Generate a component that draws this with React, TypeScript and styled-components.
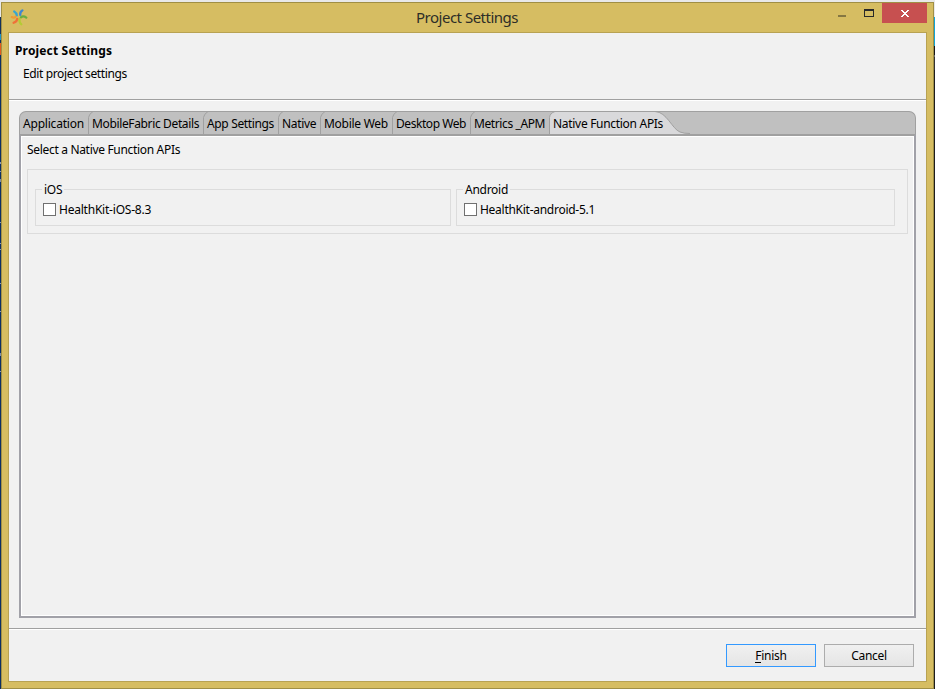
import React from "react";
import styled, { createGlobalStyle } from "styled-components";

const GlobalStyle = createGlobalStyle`
  * { box-sizing: border-box; }
  body {
    margin: 0;
    overflow: hidden;
    background: #f1f1f1;
    color: #000;
    font: 12px/16px "Noto Sans", "Open Sans", sans-serif;
  }
`;

const Desktop = styled.div`
  display: flex;
  width: 935px;
  height: 689px;
  padding-top: 2px;
  background: #e9e9e9;
`;

const LeftEdge = styled.div`
  width: 1px;
  margin-top: 15px;
  background: linear-gradient(
    #12305c 0 17px, #1d93c4 17px 23px, #12305c 23px 26px, #e2591c 26px 38px,
    #0c2e63 38px 145px, #8c9ab0 145px 147px, #0c2e63 147px 154px,
    #8c9ab0 154px 155px, #0c2e63 155px 162px,
    #7e8ca2 162px 165px, #0c2e63 165px 205px, #8c9ab0 205px 206px,
    #0c2e63 206px 226px, #8c9ab0 226px 227px, #0c2e63 227px 232px,
    #8c9ab0 232px 233px, #0c2e63 233px 266px, #8c9ab0 266px 267px,
    #0c2e63 267px 294px, #8c9ab0 294px 295px, #0c2e63 295px 336px,
    #7f8ea6 336px 339px, #0c2e63 339px 354px, #8c9ab0 354px 355px, #0c2e63 355px
  );
`;

const RightEdge = styled.div`
  width: 1px;
  margin-top: 15px;
  background: linear-gradient(#12a4d4 0 29px, #181818 29px 38px, #666 38px 40px, #333 40px 53px, #1d1d1d 53px);
`;

const Window = styled.section`
  display: flex;
  flex-direction: column;
  width: 933px;
  height: 687px;
  padding: 0 6px 6px;
  border: 1px solid #a08f45;
  background: #d6bd62;
`;

const TitleBar = styled.header`
  display: grid;
  grid-template-columns: 114px 1fr 114px;
  flex: none;
  height: 29px;
`;

const LogoCell = styled.div`
  padding: 5px 0 0 2px;
`;

const WindowTitle = styled.h1`
  margin: 0 0 0 -1px;
  padding-top: 4px;
  color: #2d2d28;
  font-size: 15px;
  font-weight: 400;
  line-height: 21px;
  letter-spacing: -0.5px;
  text-align: center;
`;

const WindowControls = styled.div`
  display: flex;
  justify-content: flex-end;
`;

const CaptionIcon = styled.svg`
  display: block;
  shape-rendering: crispEdges;
`;

const CloseButton = styled.button`
  width: 45px;
  height: 20px;
  padding: 0;
  border: 0;
  background: #c75050;
`;

const Client = styled.main`
  display: flex;
  flex: 1;
  flex-direction: column;
  min-height: 0;
  border: 1px solid #b8a252;
  background: #f1f1f1;
`;

const Heading = styled.div`
  height: 68px;
  padding: 10px 6px 0;
  border-bottom: 1px solid #fff;
  box-shadow: inset 0 -1px #a0a0a0;
`;

const PageTitle = styled.h2`
  margin: 0;
  font-size: 12px;
  font-weight: 700;
  line-height: 16px;
  letter-spacing: 0.16px;
`;

const Subtitle = styled.p`
  margin: 7px 0 0 8px;
  letter-spacing: -0.38px;
`;

const TabFolder = styled.div`
  display: flex;
  flex-direction: column;
  width: 897px;
  height: 507px;
  margin: 10px 0 0 10px;
`;

const TabBar = styled.div`
  display: flex;
  flex: none;
  height: 23px;
  overflow: hidden;
  border: 1px solid #a0a0a0;
  border-bottom: 0;
  border-radius: 7px 7px 0 0;
  background: #c0c0c0;
`;

const Tab = styled.div<{ $width: number; $spacing: number }>`
  position: relative;
  width: ${(p) => p.$width}px;
  padding: 4px 0 0 3px;
  letter-spacing: ${(p) => p.$spacing}px;
  white-space: nowrap;
`;

const TabShape = styled.svg`
  position: absolute;
  top: -1px;
  left: -1px;
  fill: none;
  stroke: #a0a0a0;
`;

const TabLabel = styled.span`
  position: relative;
`;

const Panel = styled.div`
  flex: 1;
  padding: 6px 5px;
  border: 2px solid #a1a1a8;
  border-top-color: #a0a0a0;
  box-shadow: inset 0 0 0 1px #fff;
`;

const Prompt = styled.p`
  margin: 0 0 11px 1px;
  letter-spacing: -0.32px;
`;

const Groups = styled.div`
  display: flex;
  gap: 5px;
  width: 881px;
  height: 65px;
  margin-left: 1px;
  padding: 10px 0 0 7px;
  border: 1px solid #dcdcdc;
`;

const Group = styled.fieldset<{ $width: number }>`
  width: ${(p) => p.$width}px;
  height: 46px;
  margin: 0;
  padding: 0 0 0 7px;
  border: 1px solid #dcdcdc;
`;

const Legend = styled.legend`
  height: 18px;
  margin-left: -1px;
  padding: 0 2px;
  line-height: 20px;
  letter-spacing: -0.27px;
`;

const CheckRow = styled.label<{ $spacing: number }>`
  display: flex;
  align-items: center;
  gap: 3px;
  padding-top: 4px;
  line-height: 15px;
  letter-spacing: ${(p) => p.$spacing}px;
`;

const Checkbox = styled.input`
  appearance: none;
  width: 13px;
  height: 13px;
  margin: 0;
  border: 1px solid #707070;
  background: #fff;
`;

const Footer = styled.footer`
  display: flex;
  gap: 8px;
  justify-content: flex-end;
  margin-top: 10px;
  padding: 14px 12px 0 0;
  border-top: 1px solid #a0a0a0;
  box-shadow: inset 0 1px #fff;
`;

const Button = styled.button<{ $primary?: boolean }>`
  width: 90px;
  height: 23px;
  margin-top: 1px;
  padding: 0;
  border: 1px solid ${(p) => (p.$primary ? "#3399ff" : "#acacac")};
  background: linear-gradient(#f0f0f0, #e5e5e5);
  color: #000;
  font: inherit;
  letter-spacing: -0.27px;
`;

const Mnemonic = styled.span`
  border-bottom: 1px solid #000;
  display: inline-block;
  line-height: 12px;
`;

type TabInfo = { label: string; width: number; spacing: number };

const tabs: TabInfo[] = [
  { label: "Application", width: 69, spacing: -0.2 },
  { label: "MobileFabric Details", width: 115, spacing: -0.36 },
  { label: "App Settings", width: 75, spacing: -0.35 },
  { label: "Native", width: 42, spacing: -0.35 },
  { label: "Mobile Web", width: 72, spacing: -0.27 },
  { label: "Desktop Web", width: 78, spacing: -0.44 },
  { label: "Metrics _APM", width: 79, spacing: -0.4 },
  { label: "Native Function APIs", width: 141, spacing: -0.3 },
];

const platforms = [
  { name: "iOS", item: "HealthKit-iOS-8.3", width: 416, spacing: -0.22 },
  { name: "Android", item: "HealthKit-android-5.1", width: 439, spacing: -0.27 },
];

function Logo() {
  return (
    <svg width="18" height="20" viewBox="0 0 18 20" fill="none" strokeWidth="2.3" strokeLinecap="round">
      <path d="M6.8 7.3Q6.5 4.8 4.2 3.4" stroke="#37a6cf" />
      <path d="M10.2 6.8Q9.9 4 12.4 2.4" stroke="#3f86d0" />
      <path d="M10.9 9.4Q13.2 7.3 16.3 9.6" stroke="#69ae42" />
      <path d="M9.5 11Q9 14 11.3 16.3" stroke="#b4cc34" />
      <path d="M7.2 10.8Q7 13.4 3.6 14.8" stroke="#ef7138" />
      <path d="M5.6 8.7Q4 10.3 1.8 9.1" stroke="#ef9a35" />
    </svg>
  );
}

export default function App() {
  return (
    <>
      <GlobalStyle />
      <Desktop>
        <LeftEdge />
        <Window>
          <TitleBar>
            <LogoCell>
              <Logo />
            </LogoCell>
            <WindowTitle>Project Settings</WindowTitle>
            <WindowControls>
              <CaptionIcon width="44" height="20" viewBox="0 0 44 20">
                <path d="M0 12h8v2H0z" fill="#857742" />
                <path d="M26 6h10v8H26zM27 8v5h8V8z" fill="#292929" fillRule="evenodd" />
              </CaptionIcon>
              <CloseButton aria-label="Close">
                <CaptionIcon width="45" height="20" viewBox="0 0 45 20">
                  <path
                    d="M19 7h2v1h1v1h2V8h1V7h2v1h-1v1h-1v1h-1v1h1v1h1v1h1v1h-2v-1h-1v-1h-2v1h-1v1h-2v-1h1v-1h1v-1h1v-1h-1V9h-1V8h-1z"
                    fill="#fff"
                  />
                </CaptionIcon>
              </CloseButton>
            </WindowControls>
          </TitleBar>
          <Client>
            <Heading>
              <PageTitle>Project Settings</PageTitle>
              <Subtitle>Edit project settings</Subtitle>
            </Heading>
            <TabFolder>
              <TabBar>
                {tabs.map((tab, i) => (
                  <Tab key={tab.label} $width={tab.width} $spacing={tab.spacing}>
                    {i === tabs.length - 1 ? (
                      <TabShape width="145" height="24">
                        <path
                          d="M.5 23V6.5Q1 2 6 .5H106C118 1 123 18 131 21Q135 23 141 23Z"
                          fill="#d9d9db"
                          stroke="none"
                        />
                        <path d="M.5 23V6.5Q1 2 6 .5H106C118 1 123 18 131 21Q135 22.5 141 22.5" />
                      </TabShape>
                    ) : (
                      i > 0 && (
                        <TabShape width="8" height="24">
                          <path d="M.5 23V6.5Q1 3 5 .5" />
                        </TabShape>
                      )
                    )}
                    <TabLabel>{tab.label}</TabLabel>
                  </Tab>
                ))}
              </TabBar>
              <Panel>
                <Prompt>Select a Native Function APIs</Prompt>
                <Groups>
                  {platforms.map((p) => (
                    <Group key={p.name} $width={p.width}>
                      <Legend>{p.name}</Legend>
                      <CheckRow $spacing={p.spacing}>
                        <Checkbox type="checkbox" />
                        {p.item}
                      </CheckRow>
                    </Group>
                  ))}
                </Groups>
              </Panel>
            </TabFolder>
            <Footer>
              <Button $primary>
                <Mnemonic>F</Mnemonic>inish
              </Button>
              <Button>Cancel</Button>
            </Footer>
          </Client>
        </Window>
        <RightEdge />
      </Desktop>
    </>
  );
}
